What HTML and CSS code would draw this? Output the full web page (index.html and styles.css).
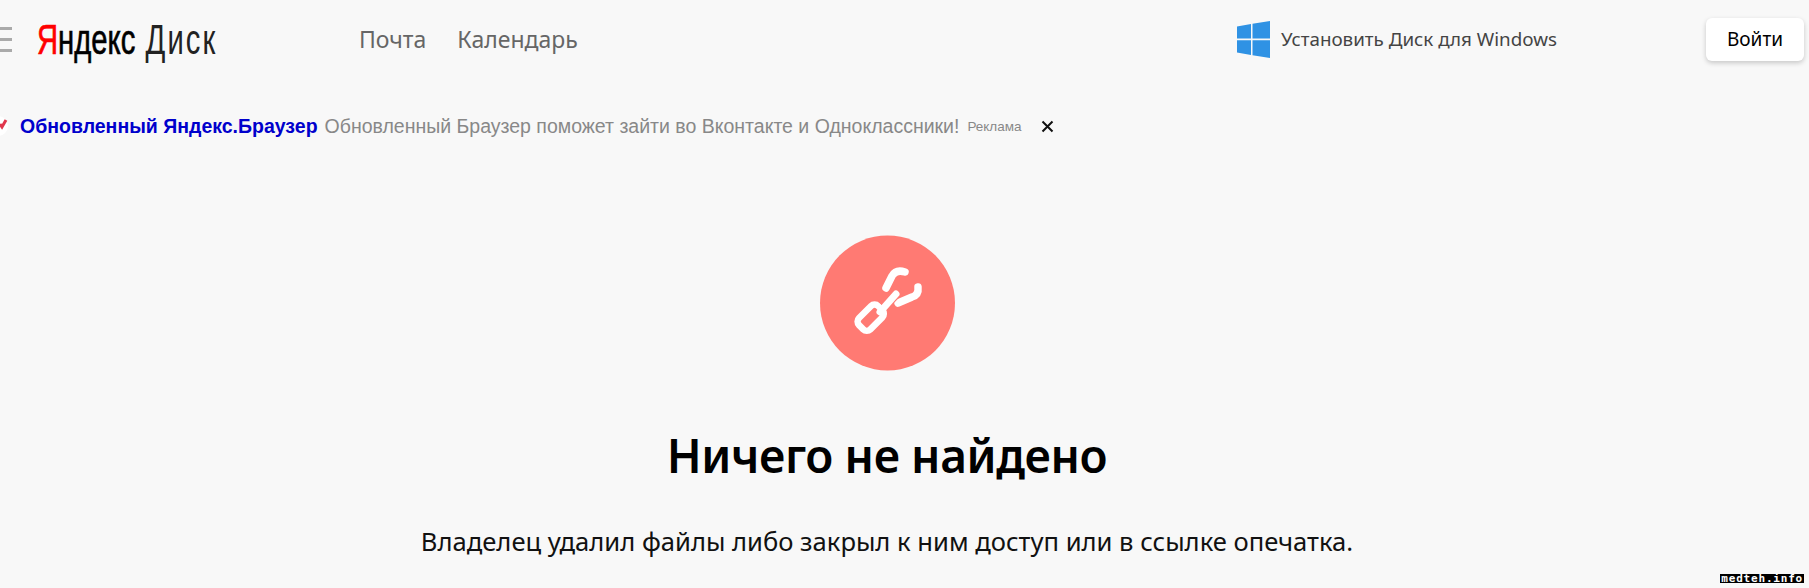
FILE: index.html
```html
<!DOCTYPE html>
<html lang="ru">
<head>
    <meta charset="UTF-8">
    <title>Яндекс Диск</title>
    <link rel="stylesheet" href="styles.css">
</head>
<body>
    <header class="header">
        <div class="burger"><span></span><span></span><span></span></div>
        <div class="logo">
            <div class="logo-text"><span class="logo-red">Я</span><span class="logo-black">ндекс</span><span class="logo-thin">Диск</span></div>
        </div>
        <nav class="nav">
            <a class="nav-link">Почта</a>
            <a class="nav-link">Календарь</a>
        </nav>
        <div class="install">
            <svg class="win-icon" width="33" height="37" viewBox="0 0 33 37">
                <path d="M0 5.5 L14 3 V17.5 H0 Z M15.5 2.7 L33 0 V17.5 H15.5 Z M0 19.2 H14 V34 L0 31.5 Z M15.5 19.2 H33 V37 L15.5 34.3 Z" fill="#2f92e4"/>
            </svg>
            <span class="install-text">Установить Диск для Windows</span>
        </div>
        <button class="login">Войти</button>
    </header>

    <div class="ad">
        <svg class="ad-icon" width="8" height="20" viewBox="0 0 8 20">
            <circle cx="-2" cy="10" r="10" fill="#fff"/>
            <path d="M0 8 L2 11 L6 4" fill="none" stroke="#e0364c" stroke-width="3"/>
        </svg>
        <span class="ad-title">Обновленный Яндекс.Браузер</span>
        <span class="ad-text">Обновленный Браузер поможет зайти во Вконтакте и Одноклассники!</span>
        <span class="ad-label">Реклама</span>
        <svg class="ad-close" width="13" height="13" viewBox="0 0 13 13">
            <path d="M1.5 1.5 L11.5 11.5 M11.5 1.5 L1.5 11.5" stroke="#111" stroke-width="2"/>
        </svg>
    </div>

    <main class="notfound">
        <svg class="notfound-icon" width="135" height="136" viewBox="0 0 135 136">
            <circle cx="67.5" cy="68" r="67.5" fill="#ff7a73"/>
            <g fill="none" stroke="#fff" stroke-linecap="round" stroke-linejoin="round">
                <rect x="37.2" y="74.7" width="27" height="16" rx="5" stroke-width="6.5" transform="rotate(-45 50.7 82.7)"/>
                <path d="M85 37 Q76 34 72 41 L66 53" stroke-width="7.5"/>
                <path d="M98 52 Q99 60 92 62 L78 68" stroke-width="7.5"/>
            </g>
            <path d="M63 71 L80 53" stroke="#ff7a73" stroke-width="12"/>
            <path d="M60 77 L76 59" stroke="#fff" stroke-width="7" stroke-linecap="round"/>
        </svg>
        <h1 class="notfound-title">Ничего не найдено</h1>
        <p class="notfound-text">Владелец удалил файлы либо закрыл к ним доступ или в ссылке опечатка.</p>
    </main>

    <div class="watermark">medteh.info</div>
</body>
</html>
```

FILE: styles.css
```css
html, body {
    height: 100%;
}
body {
    position: relative;
    margin: 0;
    height: 588px;
    overflow: hidden;
    background: #f8f8f8;
    color: #000;
    font-family: "Noto Sans", Arial, sans-serif;
}
.header {
    display: flex;
    align-items: center;
    height: 78px;
    padding-right: 5px;
}
.burger {
    display: flex;
    flex-direction: column;
    gap: 8px;
    width: 12px;
}
.burger span {
    height: 3px;
    background: #aaa;
}
.logo {
    width: 180px;
    height: 44px;
    margin-left: 25px;
}
.logo-text {
    font-family: "Liberation Sans", Arial, sans-serif;
    font-size: 43px;
    line-height: 44px;
    white-space: nowrap;
    transform: scaleX(0.68);
    transform-origin: left center;
}
.logo-red {
    color: #f00;
    -webkit-text-stroke: 0.7px #f00;
}
.logo-black {
    color: #000;
    -webkit-text-stroke: 0.7px #000;
}
.logo-thin {
    margin-left: 15px;
    color: #222;
    letter-spacing: 3px;
}
.nav {
    display: flex;
    gap: 31px;
    margin-left: 142px;
}
.nav-link {
    font-size: 23px;
    color: #666;
}
.install {
    display: flex;
    align-items: center;
    gap: 11px;
    margin-left: auto;
    margin-right: 149px;
}
.win-icon {
    display: block;
}
.install-text {
    font-size: 18.8px;
    color: #444;
}
.login {
    width: 98px;
    height: 43px;
    background: #fff;
    border: none;
    border-radius: 6px;
    box-shadow: 0 2px 5px rgba(0, 0, 0, 0.2);
    font-family: inherit;
    font-size: 19px;
    color: #000;
}
.ad {
    display: flex;
    align-items: center;
    height: 28px;
    margin-top: 34px;
    font-family: "Liberation Sans", Arial, sans-serif;
    white-space: nowrap;
}
.ad-icon {
    display: block;
    margin-right: 12px;
}
.ad-title {
    font-size: 19.5px;
    font-weight: bold;
    color: #0000cc;
}
.ad-text {
    margin-left: 7px;
    font-size: 19.5px;
    color: #888;
}
.ad-label {
    margin-left: 8px;
    font-size: 13.5px;
    color: #888;
}
.ad-close {
    display: block;
    margin-left: 19px;
}
.notfound {
    display: flex;
    flex-direction: column;
    align-items: center;
    margin-top: 95px;
    padding-right: 35px;
}
.notfound-icon {
    display: block;
}
.notfound-title {
    margin: 54px 0 0;
    font-size: 46px;
    font-weight: 600;
    line-height: 60px;
    letter-spacing: -0.4px;
}
.notfound-text {
    margin: 40px 0 0;
    font-size: 25.6px;
    line-height: 34px;
    color: #111;
}
.watermark {
    position: absolute;
    right: 5px;
    bottom: 5px;
    font-family: "DejaVu Sans Mono", monospace;
    font-size: 11px;
    font-weight: bold;
    line-height: 9px;
    color: #fff;
    background: #000;
    padding: 0 1px;
    letter-spacing: 0.8px;
}
```
